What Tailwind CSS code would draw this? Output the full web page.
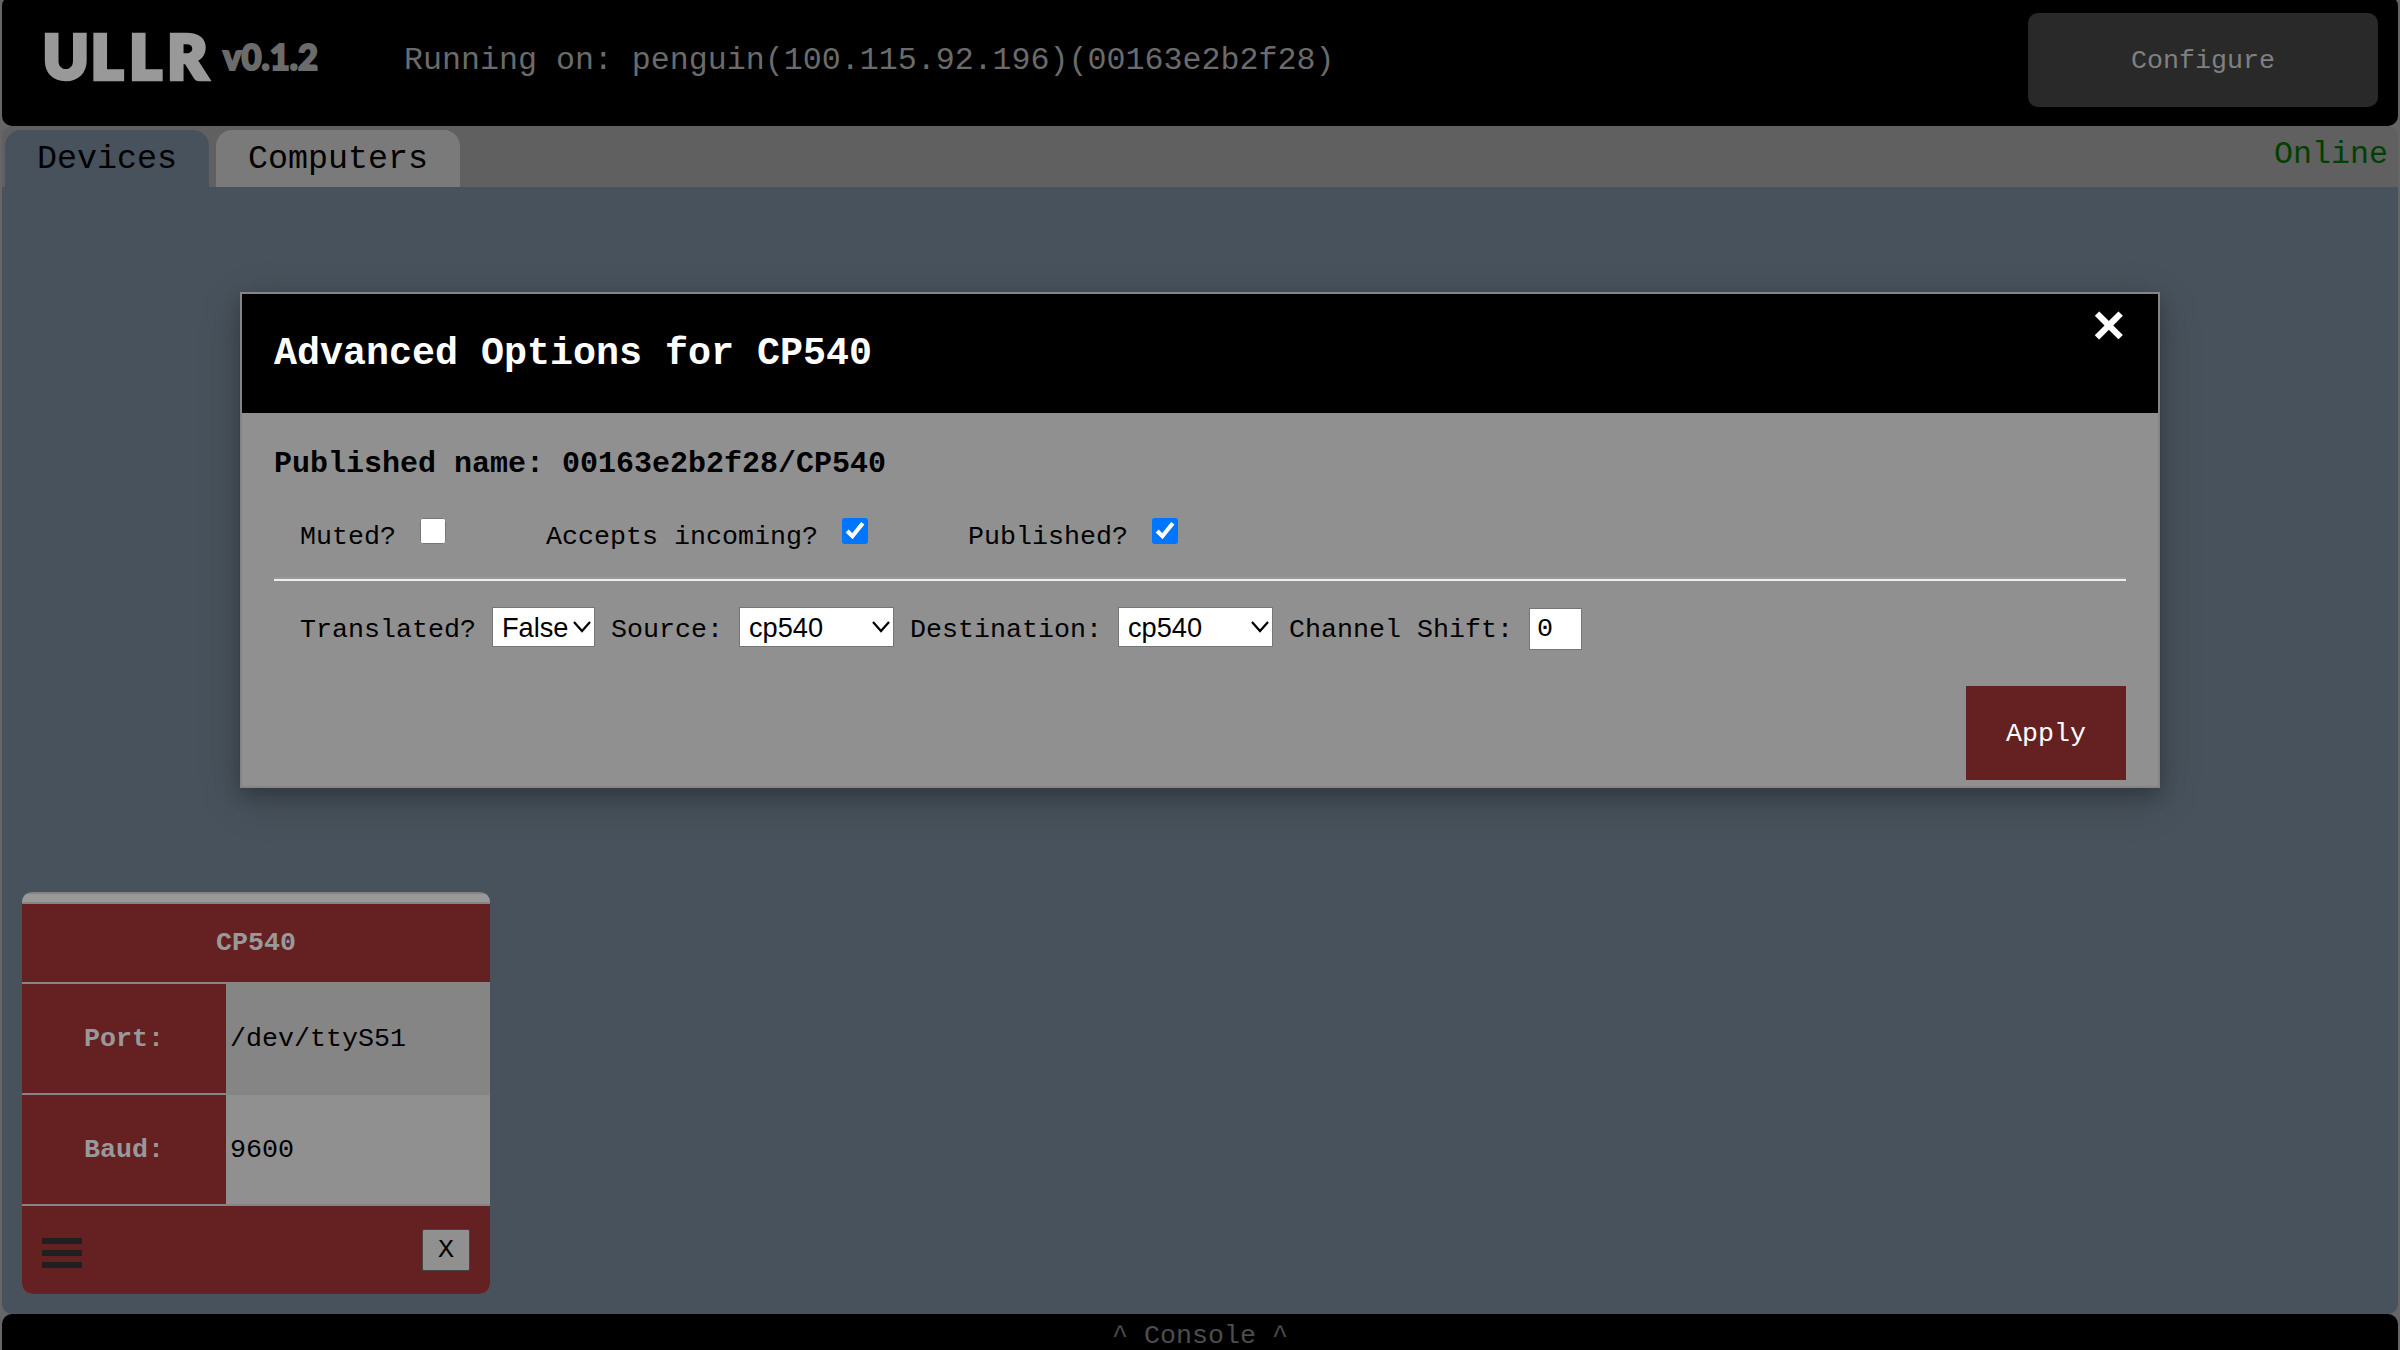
<!DOCTYPE html>
<html lang="en">
<head>
<meta charset="utf-8">
<title>ULLR</title>
<script src="https://cdn.jsdelivr.net/npm/@tailwindcss/browser@4"></script>
</head>
<body class="relative w-[2400px] h-[1350px] overflow-hidden bg-[#666666] px-[2px] flex flex-col font-['Liberation_Mono',monospace] text-[26.67px] leading-[30px] text-black">

<header class="h-[130px] -mt-1 shrink-0 rounded-[10px] bg-black flex items-start">
  <svg class="ml-[18px] mt-[4px] w-[310px] h-[110px] shrink-0 overflow-visible" viewBox="-20 -20 310 110">
    <text x="3 51 89.5 127.5" y="59" font-family="Lato" font-weight="900" font-size="61" fill="#999999" stroke="#999999" stroke-width="4.5">ULLR</text>
    <text x="183" y="50" textLength="95" lengthAdjust="spacingAndGlyphs" font-family="Lato" font-weight="900" font-size="36" fill="#6b6b6b" stroke="#6b6b6b" stroke-width="2">v0.1.2</text>
  </svg>
  <div class="ml-[74px] mt-[47px] text-[31.65px] leading-[36px] text-[#6b6b6b] whitespace-nowrap">Running on: penguin(100.115.92.196)(00163e2b2f28)</div>
  <button class="ml-auto mr-5 mt-[17px] w-[350px] h-[94px] pt-[2px] rounded-[10px] bg-[#292929] text-[#808080]">Configure</button>
</header>

<nav class="h-[61px] shrink-0 rounded-t-[10px] bg-[#606060] pl-[3px] pt-1 flex items-start text-[33.33px] leading-[38px]">
  <div class="w-[204px] h-[57px] rounded-t-[16px] bg-[#48525c] pt-[10px] text-center">Devices</div>
  <div class="ml-[7px] w-[244px] h-[57px] rounded-t-[16px] bg-[#7a7a7a] pt-[10px] text-center">Computers</div>
  <div class="ml-auto mr-[10px] mt-[7px] text-[31.65px] leading-[36px] text-[#004000]">Online</div>
</nav>

<main class="h-[1127px] shrink-0 rounded-b-[10px] bg-[#48525c] pl-5 pb-5 flex items-end">
  <section class="w-[468px] h-[402px] rounded-[10px] overflow-hidden flex flex-col bg-[#858585]">
    <div class="mt-[2px] h-2 bg-[#999999]"></div>
    <div class="mt-[2px] h-[78px] bg-[#652122] text-[#999999] font-bold flex items-center justify-center">CP540</div>
    <div class="mt-[2px] h-[109px] flex items-center">
      <div class="w-[204px] h-full bg-[#652122] text-[#999999] font-bold flex items-center justify-center">Port:</div>
      <div class="pl-1">/dev/ttyS51</div>
    </div>
    <div class="mt-[2px] h-[109px] flex items-center">
      <div class="w-[204px] h-full bg-[#652122] text-[#999999] font-bold flex items-center justify-center">Baud:</div>
      <div class="pl-1 h-full flex-1 bg-[#909090] flex items-center">9600</div>
    </div>
    <div class="mt-[2px] h-[88px] bg-[#652122] px-5 flex items-center justify-between">
      <div class="w-10 mt-[6px] flex flex-col gap-[6px]">
        <div class="h-[6px] bg-[#202020]"></div>
        <div class="h-[6px] bg-[#202020]"></div>
        <div class="h-[6px] bg-[#202020]"></div>
      </div>
      <button class="w-12 h-[42px] rounded-[2px] border border-[#444444] bg-[#909090] leading-[30px]">X</button>
    </div>
  </section>
</main>

<footer class="h-[50px] shrink-0 rounded-t-[10px] bg-black pt-[7px] text-center text-[#4d4d4d]">^ Console ^</footer>

<!-- Advanced options dialog -->
<div class="absolute left-[240px] top-[292px] w-[1920px] h-[496px] border-2 border-[#858585] bg-[#909090] shadow-[0_8px_16px_0_rgba(0,0,0,0.2),0_12px_40px_0_rgba(0,0,0,0.19)]">
  <div class="h-[119px] bg-black text-white px-8 flex items-start justify-between">
    <h2 class="mt-[38px] text-[38.33px] leading-[44px] font-bold">Advanced Options for CP540</h2>
    <span class="mt-[3px] w-[34px] text-[56px] leading-[64px] font-bold">&times;</span>
  </div>
  <div class="px-8 flex flex-col">
    <h3 class="mt-[34px] text-[30px] leading-[34px] font-bold">Published name: 00163e2b2f28/CP540</h3>
    <div class="mt-[36px] pl-[26px] h-[34px] flex items-start">
      <label class="mt-[5px] w-[120px]">Muted?</label>
      <input type="checkbox" class="mt-px w-[26px] h-[26px]">
      <label class="mt-[5px] ml-[100px] w-[296px]">Accepts incoming?</label>
      <input type="checkbox" checked class="mt-px w-[26px] h-[26px]">
      <label class="mt-[5px] ml-[100px] w-[184px]">Published?</label>
      <input type="checkbox" checked class="mt-px w-[26px] h-[26px]">
    </div>
    <div class="mt-[26px] h-1 border-t-2 border-b-2 border-t-[#999999] border-b-[#eeeeee]"></div>
    <div class="mt-[26px] pl-[26px] h-[43px] flex items-start whitespace-nowrap">
      <label class="mt-[8px] w-[192px]">Translated?</label>
      <div class="w-[103px] h-10 border border-[#767676] bg-white pl-[9px] pr-[2px] pt-px flex items-center justify-between text-[27.2px] font-['Liberation_Sans',sans-serif]">False
        <svg class="w-5 h-5 shrink-0" viewBox="0 0 20 20" fill="none" stroke="#000" stroke-width="2.2"><path d="M2 4l8 9 8-9"/></svg>
      </div>
      <label class="mt-[8px] ml-4 w-[128px]">Source:</label>
      <div class="w-[155px] h-10 border border-[#767676] bg-white pl-[9px] pr-[2px] pt-px flex items-center justify-between text-[27.2px] font-['Liberation_Sans',sans-serif]">cp540
        <svg class="w-5 h-5" viewBox="0 0 20 20" fill="none" stroke="#000" stroke-width="2.2"><path d="M2 4l8 9 8-9"/></svg>
      </div>
      <label class="mt-[8px] ml-4 w-[208px]">Destination:</label>
      <div class="w-[155px] h-10 border border-[#767676] bg-white pl-[9px] pr-[2px] pt-px flex items-center justify-between text-[27.2px] font-['Liberation_Sans',sans-serif]">cp540
        <svg class="w-5 h-5" viewBox="0 0 20 20" fill="none" stroke="#000" stroke-width="2.2"><path d="M2 4l8 9 8-9"/></svg>
      </div>
      <label class="mt-[8px] ml-4 w-[240px]">Channel Shift:</label>
      <div class="mt-px w-[53px] h-[42px] border border-[#767676] bg-white pl-[7px] flex items-center">0</div>
    </div>
    <button class="mt-[36px] ml-auto w-[160px] h-[94px] pt-[2px] bg-[#652122] text-white">Apply</button>
  </div>
</div>
</body>
</html>
